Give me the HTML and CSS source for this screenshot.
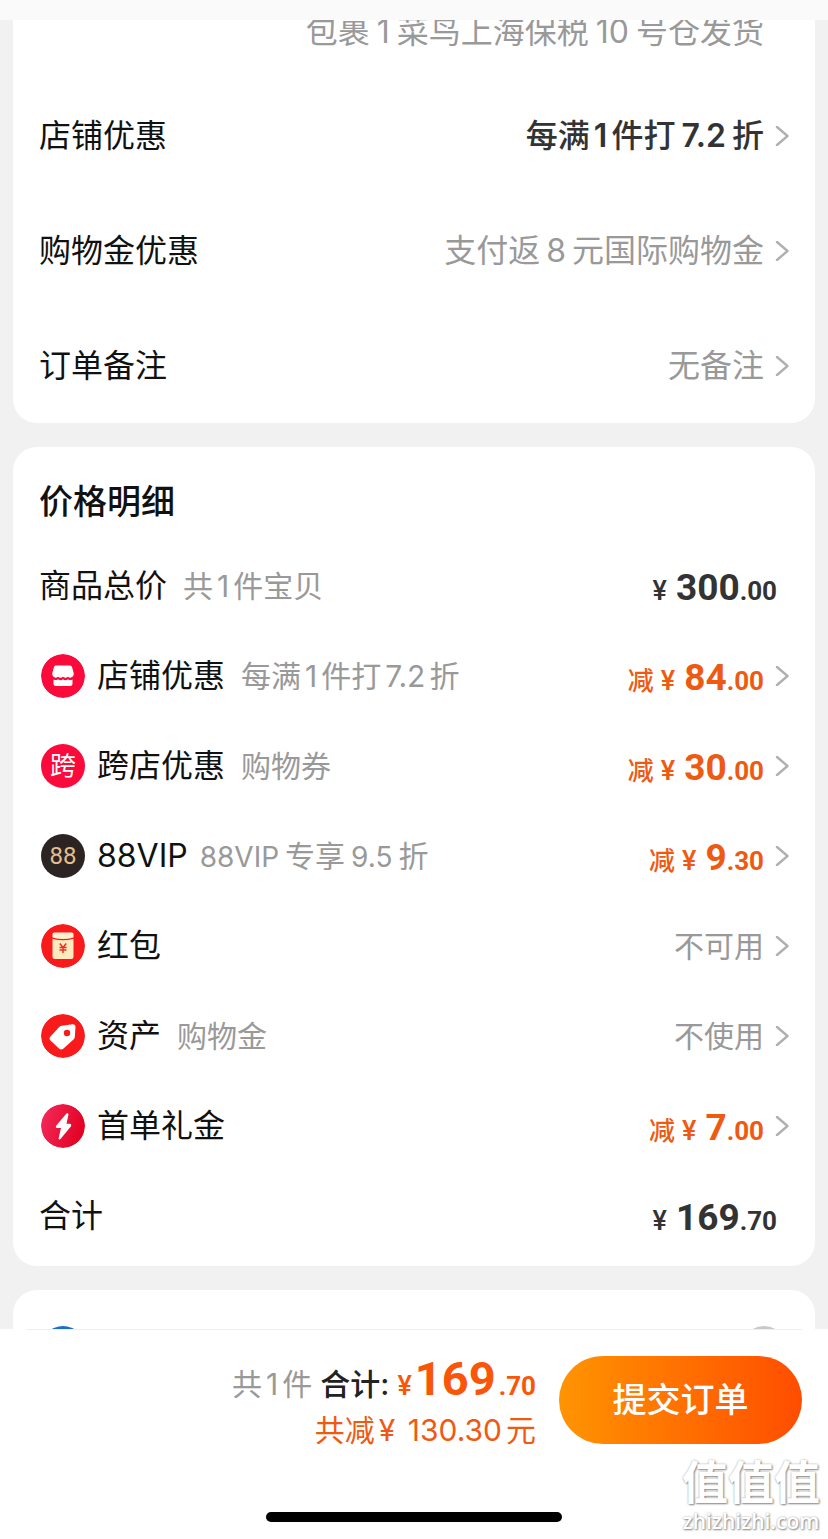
FILE: index.html
```html
<!DOCTYPE html>
<html lang="zh-CN">
<head>
<meta charset="utf-8">
<meta name="viewport" content="width=device-width, initial-scale=1">
<title>确认订单</title>
<link rel="stylesheet" href="styles.css">
</head>
<body>
<svg class="defs" aria-hidden="true">
  <symbol id="chevron" viewBox="0 0 14 20"><path d="M2 1 L12.500 10 L2 19" fill="none" stroke="#b0b0b0" stroke-width="2.4" stroke-linecap="round" stroke-linejoin="round"/></symbol>
</svg>
<header class="topbar"></header>
<main class="content">
  <section class="card options">
    <div class="package">包裹<span class="n roomy">1</span>菜鸟上海保税<span class="n roomy">10</span>号仓发货</div>
    <div class="option">
      <span class="label">店铺优惠</span>
      <span class="value strong">每满<span class="n">1</span>件打<span class="n wide">7.2</span>折</span>
      <svg class="chevron"><use href="#chevron"/></svg>
    </div>
    <div class="option">
      <span class="label">购物金优惠</span>
      <span class="value">支付返<span class="n wide">8</span>元国际购物金</span>
      <svg class="chevron"><use href="#chevron"/></svg>
    </div>
    <div class="option">
      <span class="label">订单备注</span>
      <span class="value">无备注</span>
      <svg class="chevron"><use href="#chevron"/></svg>
    </div>
  </section>

  <section class="card prices">
    <h2 class="title">价格明细</h2>
    <div class="row plain">
      <span class="label">商品总价</span>
      <span class="note">共<span class="n">1</span>件宝贝</span>
      <span class="price"><span class="yen">¥</span><span class="int">300</span><span class="dec">.00</span></span>
    </div>
    <div class="row">
      <svg class="icon" viewBox="0 0 44 44"><circle cx="22" cy="22" r="22" fill="#fb0a3c"/><path d="M14.5 11.5H29Q30.5 11.5 31 13L32.7 19Q33 21 31.8 22.6Q29.500 24.800 27 22.800Q24.500 24.800 22 22.800Q19.500 24.800 17 22.800Q14.500 24.800 12.200 22.600Q11 21 11.300 19L13 13Q13.400 11.500 14.500 11.500Z" fill="#fff"/><path d="M12.500 25.600Q15 26.800 17 25.200Q19.500 27.200 22 25.200Q24.500 27.200 27 25.200Q29 26.800 31.500 25.600V29.500Q31.500 32 29 32H15Q12.500 32 12.500 29.500Z" fill="#fff"/></svg>
      <span class="label">店铺优惠</span>
      <span class="note">每满<span class="n">1</span>件打<span class="n">7.2</span>折</span>
      <span class="price cut"><span class="off">减</span><span class="yen">¥</span><span class="int">84</span><span class="dec">.00</span></span>
      <svg class="chevron"><use href="#chevron"/></svg>
    </div>
    <div class="row">
      <span class="icon cross">跨</span>
      <span class="label">跨店优惠</span>
      <span class="note">购物券</span>
      <span class="price cut"><span class="off">减</span><span class="yen">¥</span><span class="int">30</span><span class="dec">.00</span></span>
      <svg class="chevron"><use href="#chevron"/></svg>
    </div>
    <div class="row">
      <span class="icon vip">88</span>
      <span class="label">88VIP</span>
      <span class="note near"><span class="latin">88VIP</span><span class="n wide">专享</span><span class="latin">9.5</span><span class="n wide last">折</span></span>
      <span class="price cut"><span class="off">减</span><span class="yen">¥</span><span class="int">9</span><span class="dec">.30</span></span>
      <svg class="chevron"><use href="#chevron"/></svg>
    </div>
    <div class="row">
      <svg class="icon" viewBox="0 0 44 44"><circle cx="22" cy="22" r="22" fill="#f91a1c"/><path d="M13 8.500H31Q32.500 8.500 32.500 10V13.500Q22 16.500 11.500 13.500V10Q11.500 8.500 13 8.500Z" fill="#fff0d0"/><path d="M11.500 14.800Q22 17.800 32.500 14.800V33Q32.500 35 30.500 35H13.500Q11.500 35 11.500 33Z" fill="#ffeac0"/><path d="M18.800 19.500L22 23.500L25.200 19.500M18.500 23.500H25.500M18.500 26H25.500M22 23.500V29" fill="none" stroke="#e5341f" stroke-width="1.500"/></svg>
      <span class="label">红包</span>
      <span class="status">不可用</span>
      <svg class="chevron"><use href="#chevron"/></svg>
    </div>
    <div class="row">
      <svg class="icon" viewBox="0 0 44 44"><circle cx="22" cy="22" r="22" fill="#f91a1c"/><path d="M20.500 11.800L31.500 10.200Q34.500 10 34.500 13L33.800 23Q33.600 24.500 32.500 25.500L22.500 34.500Q20 36.500 18 34.500L9.500 26.500Q7.500 24.300 9.500 22.500L18 13.300Q19 12.100 20.500 11.800Z" fill="#fff"/><circle cx="26" cy="19" r="3.200" fill="#f91a1c"/></svg>
      <span class="label">资产</span>
      <span class="note">购物金</span>
      <span class="status">不使用</span>
      <svg class="chevron"><use href="#chevron"/></svg>
    </div>
    <div class="row">
      <svg class="icon" viewBox="0 0 44 44"><defs><linearGradient id="gift" x1="0" y1="0.300" x2="1" y2="0.600"><stop offset="0" stop-color="#f32858"/><stop offset="1" stop-color="#e20021"/></linearGradient></defs><circle cx="22" cy="22" r="22" fill="url(#gift)"/><path d="M25.500 9.500L15.300 21.500Q14 24 16.500 24H20L17.500 34.500Q18 36 19.500 35L29.800 22.500Q31 20 28.500 19.700H25.500L27.500 10.500Q27.300 8.500 25.500 9.500Z" fill="#fff"/></svg>
      <span class="label">首单礼金</span>
      <span class="price cut"><span class="off">减</span><span class="yen">¥</span><span class="int">7</span><span class="dec">.00</span></span>
      <svg class="chevron"><use href="#chevron"/></svg>
    </div>
    <div class="row plain">
      <span class="label">合计</span>
      <span class="price"><span class="yen">¥</span><span class="int">169</span><span class="dec">.70</span></span>
    </div>
  </section>

  <section class="card payment">
    <span class="pay-logo"></span>
    <input class="pay-choice" type="radio" name="pay" aria-label="支付方式">
  </section>
</main>

<footer class="bottom">
  <div class="checkout">
    <div class="summary">
      <div class="total"><span class="count">共<span class="n">1</span>件</span><span class="sum">合计:</span><span class="amount"><span class="yen">¥</span><span class="big">169</span><span class="dec">.70</span></span></div>
      <div class="saved">共减<span class="n">¥</span> 130.30<span class="n last">元</span></div>
    </div>
    <button class="submit" type="button">提交订单</button>
  </div>
  <div class="home"></div>
  <div class="watermark"><span class="mark">值值值</span><span class="site">zhizhizhi.com</span></div>
</footer>
</body>
</html>
```
FILE: styles.css
```css
* { box-sizing: border-box; }
body {
  margin: 0;
  min-height: 100vh;
  display: flex;
  flex-direction: column;
  background: #f1f1f1;
  color: #111;
  font-family: Inter, "Noto Sans CJK SC", sans-serif;
  font-size: 32px;
  line-height: 40px;
  text-autospace: no-autospace;
  white-space: nowrap;
}
.defs { position: absolute; width: 0; height: 0; }
.topbar { height: 20px; background: #fafafa; }
.content { display: flex; flex-direction: column; gap: 24px; padding: 0 13px; }
.card { background: #fff; border-radius: 24px; padding: 0 26px; overflow: hidden; }
.n { margin: 0 4px; }
.n.wide { margin: 0 6px; }
.n.roomy { margin: 0 7px; }
.n.last { margin-right: 0; }

.options { border-top-left-radius: 0; border-top-right-radius: 0; }
.package { height: 58px; line-height: 24px; padding-right: 25px; text-align: right; color: #999; }
.option { height: 115px; display: flex; align-items: center; }
.value { margin-left: auto; color: #999; }
.value.strong { color: #333; font-weight: 500; }
.strong .n { font-weight: 600; }
.chevron { width: 14px; height: 20px; margin-left: 11px; flex: none; }

.prices { padding-top: 15px; padding-bottom: 5px; }
.title { margin: 0; height: 79px; line-height: 80px; font-size: 34px; font-weight: 500; }
.row { height: 90px; display: flex; align-items: center; }
.row.plain { padding-right: 12px; }
.icon { width: 44px; height: 44px; margin: 0 12px 0 2px; flex: none; border-radius: 50%; }
.cross { background: #fb0a3c; color: #fff; font-size: 26px; line-height: 44px; text-align: center; }
.vip { background: #2b2422; color: #e8bd8c; font: 24px/44px Roboto, sans-serif; text-align: center; }
.note { margin-left: 16px; font-size: 30px; color: #999; }
.note.near { margin-left: 12px; }
.latin { font-size: 28px; }
.status { margin-left: auto; font-size: 30px; color: #999; }
.price { margin-left: auto; padding-top: 6px; display: flex; align-items: baseline; color: #333; font-family: Roboto, "Noto Sans CJK SC", sans-serif; font-weight: 700; }
.price.cut { color: #ee5a12; }
.off { font-size: 26px; font-weight: 500; margin-right: 7px; }
.yen { font-size: 27px; font-weight: 500; margin-right: 9px; }
.int { font-size: 37px; }
.dec { font-size: 26px; }

.payment { height: 39px; display: flex; justify-content: space-between; padding-top: 36px; border-bottom-left-radius: 0; border-bottom-right-radius: 0; }
.pay-logo { width: 44px; height: 44px; margin-left: 2px; border-radius: 50%; background: #1a6fd0; flex: none; }
.pay-choice { appearance: none; width: 44px; height: 44px; margin: 0 3px 0 0; border: 3px solid #c8c8c8; border-radius: 50%; flex: none; }

.bottom { position: relative; flex: 1; min-height: 210px; background: #fff; padding: 0 26px; }
.bottom::before { content: ""; display: block; height: 1px; background: #efefef; }
.checkout { display: flex; justify-content: flex-end; align-items: flex-start; gap: 23px; padding-top: 26px; }
.summary { text-align: right; }
.total { height: 52px; display: flex; align-items: baseline; justify-content: flex-end; font-size: 30px; line-height: 46px; }
.count { color: #999; margin-right: 8px; }
.sum { color: #222; font-weight: 500; margin-right: 8px; }
.amount { color: #f9560a; font-family: Roboto, sans-serif; font-weight: 700; }
.amount .yen { margin-right: 3px; }
.amount .dec { margin-left: 3px; }
.big { font-size: 47px; }
.saved { color: #ee5a12; font-size: 30px; line-height: 44px; }
.submit { width: 243px; height: 88px; border: 0; border-radius: 44px; background: linear-gradient(90deg, #ff9402, #ff4d00); color: #fff; font: inherit; font-size: 34px; font-weight: 500; }
.home { width: 296px; height: 10px; margin: 60px auto 0; border-radius: 5px; background: #000; }
.watermark { position: absolute; right: 8px; bottom: 8px; display: flex; flex-direction: column; align-items: center; gap: 4px; color: #fff; text-shadow: 1px 1px 2px #888, 0 0 2px #aaa; font-weight: 700; }
.mark { font-size: 46px; line-height: 50px; }
.site { font: 600 21px/20px "Open Sans", sans-serif; }
```
